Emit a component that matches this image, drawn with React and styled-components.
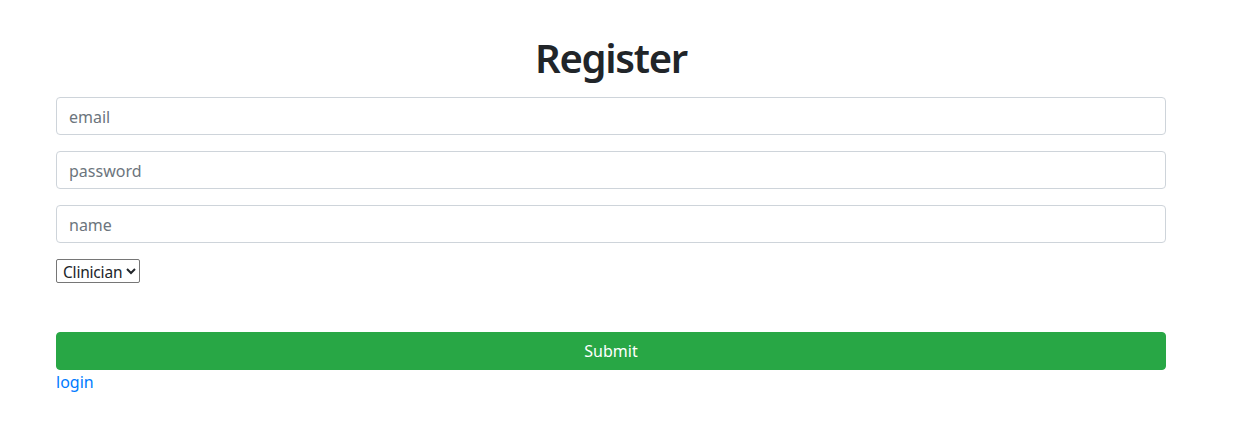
import React from "react";
import styled, { createGlobalStyle } from "styled-components";

const Global = createGlobalStyle`
  html, body { margin: 0; padding: 0; background: #fff; }
  body {
    font-family: "Noto Sans", "Segoe UI", Roboto, sans-serif;
    font-size: 16px;
    line-height: 1.5;
    color: #212529;
  }
  * { box-sizing: border-box; }
`;

const Container = styled.div`
  width: 1110px;
  margin-left: 56px;
  padding-top: 34px;
`;

const Title = styled.h1`
  margin: 0 0 15px;
  font-size: 40px;
  line-height: 48px;
  font-weight: 600;
  letter-spacing: -1.3px;
  text-align: center;
  color: #212529;
`;

const Form = styled.form`
  display: flex;
  flex-direction: column;
`;

const Group = styled.div`
  margin-bottom: 16px;
`;

const Input = styled.input`
  display: block;
  width: 100%;
  height: 38px;
  padding: 7px 12px 5px;
  font-family: inherit;
  font-size: 16px;
  line-height: 1.5;
  color: #495057;
  background: #fff;
  border: 1px solid #ced4da;
  border-radius: 4px;
  outline: none;
  &::placeholder { color: #6c757d; opacity: 1; }
`;

const Select = styled.select`
  align-self: flex-start;
  font-family: inherit;
  font-size: 15.5px;
  letter-spacing: -0.2px;
  height: 24px;
  padding: 0 0 0 2px;
  color: #212529;
  background: #fff;
  border: 1px solid #767676;
  border-radius: 2px;
  margin-bottom: 49px;
`;

const Button = styled.button`
  display: block;
  width: 100%;
  height: 38px;
  font-family: inherit;
  font-size: 16px;
  line-height: 1.5;
  color: #fff;
  background: #28a745;
  border: 1px solid #28a745;
  border-radius: 4px;
  cursor: pointer;
`;

const LoginLink = styled.a`
  align-self: flex-start;
  color: #007bff;
  text-decoration: none;
  font-size: 16px;
  line-height: 24px;
`;

export default function App() {
  return (
    <>
      <Global />
      <Container>
        <Title>Register</Title>
        <Form onSubmit={(e) => e.preventDefault()}>
          <Group><Input type="email" placeholder="email" /></Group>
          <Group><Input type="password" placeholder="password" /></Group>
          <Group><Input type="text" placeholder="name" /></Group>
          <Select defaultValue="Clinician">
            <option>Clinician</option>
            <option>Patient</option>
          </Select>
          <Button type="submit">Submit</Button>
          <LoginLink href="#">login</LoginLink>
        </Form>
      </Container>
    </>
  );
}
